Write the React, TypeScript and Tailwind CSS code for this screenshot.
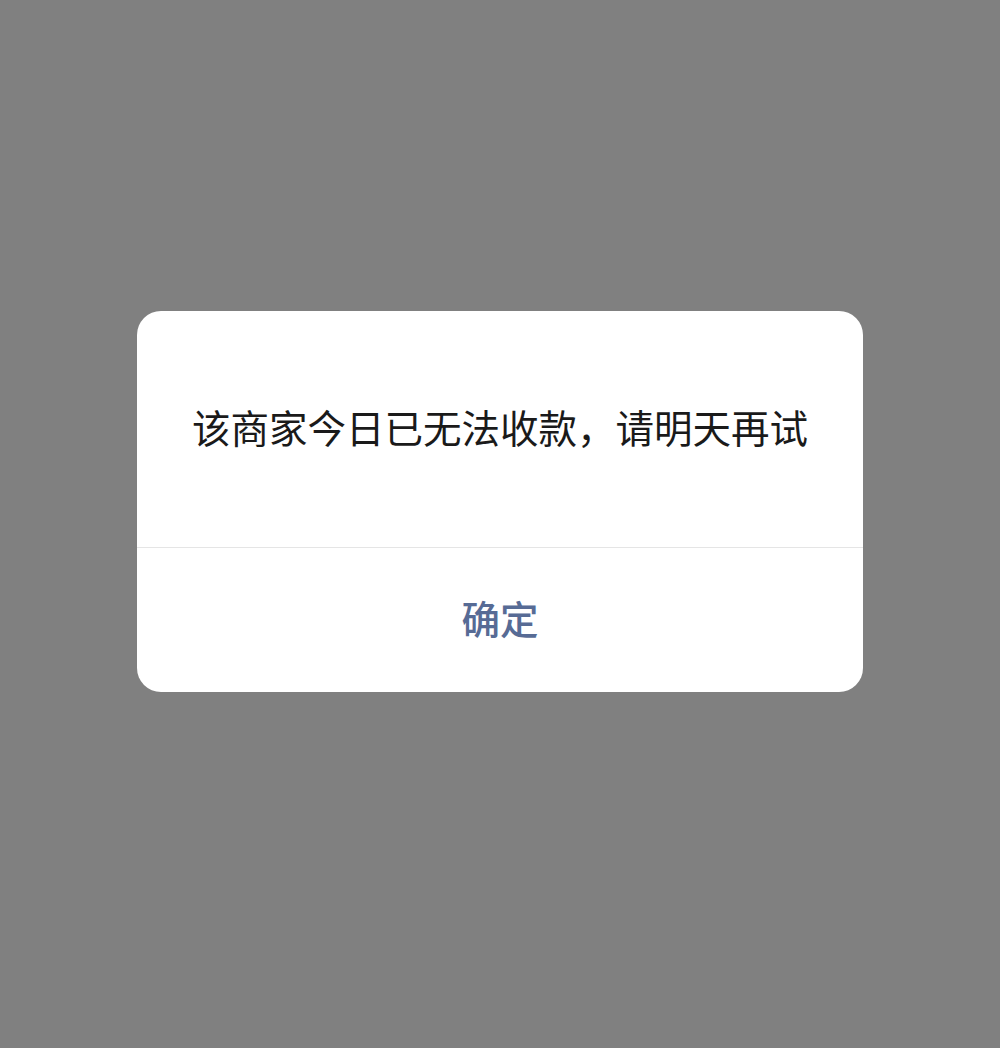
export default function App() {
  return (
    <div
      className="w-full h-[1048px] bg-[#808080] flex flex-col items-center pt-[311px]"
      style={{ fontFamily: '"Noto Sans CJK SC", "Noto Sans", sans-serif' }}
    >
      <div className="w-[726px] bg-white rounded-[24px] overflow-hidden">
        <div className="h-[236px] flex items-center justify-center px-6 pb-[7px]">
          <p className="text-[38.5px] leading-[50px] text-[#1a1a1a] text-center whitespace-nowrap">
            该商家今日已无法收款，请明天再试
          </p>
        </div>
        <div className="h-px bg-[#e5e5e5]" />
        <button className="w-full h-[144px] flex items-center justify-center pb-[5px] text-[38.5px] font-medium text-[#576b95]">
          确定
        </button>
      </div>
    </div>
  );
}
